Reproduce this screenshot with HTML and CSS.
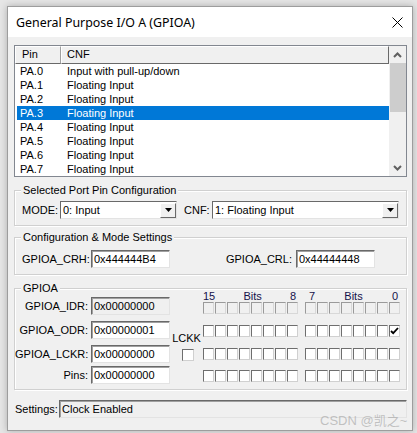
FILE: index.html
```html
<!DOCTYPE html>
<html>
<head>
<meta charset="utf-8">
<link rel="stylesheet" href="styles.css">
</head>
<body>
<div class="window">
  <div class="titlebar">
    <span class="title">General Purpose I/O A (GPIOA)</span>
    <svg class="close" width="11" height="11" viewBox="0 0 11 11"><path d="M0.5 0.5 L10.5 10.5 M10.5 0.5 L0.5 10.5" stroke="#000" stroke-width="1" fill="none"/></svg>
  </div>
  <div class="body">
    <div class="listview">
      <div class="lv-main">
        <div class="lv-header">
          <div class="hcell hpin">Pin</div>
          <div class="hcell hcnf">CNF</div>
        </div>
        <div class="lv-row"><span class="cpin">PA.0</span><span class="ccnf">Input with pull-up/down</span></div>
        <div class="lv-row"><span class="cpin">PA.1</span><span class="ccnf">Floating Input</span></div>
        <div class="lv-row"><span class="cpin">PA.2</span><span class="ccnf">Floating Input</span></div>
        <div class="lv-row sel"><span class="cpin">PA.3</span><span class="ccnf">Floating Input</span></div>
        <div class="lv-row"><span class="cpin">PA.4</span><span class="ccnf">Floating Input</span></div>
        <div class="lv-row"><span class="cpin">PA.5</span><span class="ccnf">Floating Input</span></div>
        <div class="lv-row"><span class="cpin">PA.6</span><span class="ccnf">Floating Input</span></div>
        <div class="lv-row"><span class="cpin">PA.7</span><span class="ccnf">Floating Input</span></div>
      </div>
      <div class="scrollbar">
        <div class="sb-btn"><svg width="9" height="6" viewBox="0 0 9 6"><path d="M1 5 L4.5 1.5 L8 5" stroke="#606060" stroke-width="2" fill="none"/></svg></div>
        <div class="sb-track"><div class="sb-thumb"></div></div>
        <div class="sb-btn"><svg width="9" height="6" viewBox="0 0 9 6"><path d="M1 1 L4.5 4.5 L8 1" stroke="#606060" stroke-width="2" fill="none"/></svg></div>
      </div>
    </div>

    <div class="group g1">
      <span class="gtitle">Selected Port Pin Configuration</span>
      <div class="g1-row">
        <span class="lbl-mode">MODE:</span>
        <div class="combo c-mode"><span class="ctext">0: Input</span><span class="cbtn"><svg width="7" height="4" viewBox="0 0 7 4"><path d="M0 0 H7 L3.5 4 Z" fill="#000"/></svg></span></div>
        <span class="lbl-cnf">CNF:</span>
        <div class="combo c-cnf"><span class="ctext">1: Floating Input</span><span class="cbtn"><svg width="7" height="4" viewBox="0 0 7 4"><path d="M0 0 H7 L3.5 4 Z" fill="#000"/></svg></span></div>
      </div>
    </div>

    <div class="group g2">
      <span class="gtitle">Configuration &amp; Mode Settings</span>
      <div class="g2-row">
        <span class="lbl-crh">GPIOA_CRH:</span>
        <div class="edit">0x444444B4</div>
        <span class="lbl-crl">GPIOA_CRL:</span>
        <div class="edit">0x44444448</div>
      </div>
    </div>

    <div class="group g3">
      <span class="gtitle">GPIOA</span>
      <div class="g3-content">
        <div class="regs">
          <div class="reg r1"><span class="rlbl">GPIOA_IDR:</span><div class="edit ro">0x00000000</div></div>
          <div class="reg r2"><span class="rlbl">GPIOA_ODR:</span><div class="edit">0x00000001</div></div>
          <div class="reg r3"><span class="rlbl">GPIOA_LCKR:</span><div class="edit">0x00000000</div></div>
          <div class="reg r4"><span class="rlbl">Pins:</span><div class="edit">0x00000000</div></div>
        </div>
        <div class="lckk">
          <span class="lckk-lbl">LCKK</span>
          <span class="cb"></span>
        </div>
        <div class="bits">
          <div class="bits-head">
            <div class="bh bh1"><span>15</span><span>Bits</span><span>8</span></div>
            <div class="bh bh2"><span>7</span><span>Bits</span><span>0</span></div>
          </div>
          <div class="brow b1" id="row-idr"></div>
          <div class="brow b2" id="row-odr"></div>
          <div class="brow b3" id="row-lckr"></div>
          <div class="brow b4" id="row-pins"></div>
        </div>
      </div>
    </div>

    <div class="settings">
      <span class="lbl-set">Settings:</span>
      <div class="edit ro set-box">Clock Enabled</div>
    </div>
  </div>
</div>
<div class="watermark">CSDN @凯之~</div>
<script>
(function(){
  var rows=[['row-idr',true,0],['row-odr',false,1],['row-lckr',false,0],['row-pins',false,0]];
  rows.forEach(function(r){
    var el=document.getElementById(r[0]);
    for(var g=0;g<2;g++){
      var grp=document.createElement('div');grp.className='bgroup';
      for(var i=0;i<8;i++){
        var c=document.createElement('span');
        c.className='cb'+(r[1]?' dis':'');
        var bit=15-(g*8+i);
        if(bit===0 && r[2]){
          c.className+=' on';
          c.innerHTML='<svg width="9" height="8" viewBox="0 0 9 8"><path d="M1 4 L3.2 6.2 L8 1" stroke="#000" stroke-width="1.8" fill="none"/></svg>';
        }
        grp.appendChild(c);
      }
      el.appendChild(grp);
    }
  });
})();
</script>
</body>
</html>
```

FILE: styles.css
```css
html, body { margin: 0; padding: 0; }
body {
  width: 417px;
  height: 433px;
  background: #e6e6e6;
  font-family: "Liberation Sans", Arial, sans-serif;
  font-size: 11px;
  color: #000;
  position: relative;
  overflow: hidden;
  padding-top: 6px;
  padding-left: 7px;
  box-sizing: border-box;
}
.window {
  width: 406px;
  height: 425px;
  box-sizing: border-box;
  border: 1px solid #9d9d9d;
  background: #f0f0f0;
  box-shadow: 0 0 7px rgba(0,0,0,0.25);
  display: flex;
  flex-direction: column;
}
.titlebar {
  height: 30px;
  flex: none;
  background: #fff;
  display: flex;
  align-items: center;
  padding: 0 9px 0 8px;
}
.title {
  font-family: "Noto Sans", "Open Sans", sans-serif;
  font-size: 12.4px;
  flex: 1;
  padding-top: 1px;
}
.close { display: block; margin-top: 1px; }

.body {
  padding: 8px 5px 0 6px;
  display: flex;
  flex-direction: column;
}

/* list view */
.listview {
  height: 132px;
  box-sizing: border-box;
  border: 1px solid #828790;
  background: #fff;
  display: flex;
}
.lv-main { flex: 1; }
.lv-header {
  height: 18px;
  display: flex;
  box-sizing: border-box;
}
.hcell {
  box-sizing: border-box;
  background: #f0f0f0;
  border-top: 1px solid #fff;
  border-left: 1px solid #fff;
  border-right: 1px solid #a0a0a0;
  border-bottom: 1px solid #696969;
  line-height: 15px;
}
.hpin { width: 46px; padding-left: 6px; }
.hcnf { flex: 1; padding-left: 5px; border-right-color: #696969; }
.lv-row {
  height: 14px;
  line-height: 14px;
  margin-left: 2px;
  display: flex;
}
.lv-row.sel { background: #0078d7; color: #fff; }
.cpin { width: 44px; padding-left: 3px; }
.ccnf { padding-left: 3px; }

.scrollbar {
  width: 17px;
  background: #f0f0f0;
  display: flex;
  flex-direction: column;
}
.sb-btn {
  height: 17px;
  display: flex;
  align-items: center;
  justify-content: center;
}
.sb-btn svg { display: block; }
.sb-track { flex: 1; }
.sb-thumb { height: 49px; margin: 0 0 0 1px; background: #cdcdcd; }

/* group boxes */
.group {
  position: relative;
  border: 1px solid #d0d0d0;
  box-shadow: inset 1px 1px 0 #fff, 1px 1px 0 #fff;
}
.gtitle {
  position: absolute;
  top: -7px;
  left: 6px;
  padding: 0 2px;
  line-height: 13px;
  background: #f0f0f0;
}
.g1 { margin-top: 13px; padding: 10px 0 6px 7px; }
.g1-row { display: flex; align-items: center; height: 18px; }
.lbl-mode { width: 38px; }
.lbl-cnf { width: 28px; margin-left: 7px; }
.combo {
  height: 18px;
  box-sizing: border-box;
  border: 1px solid;
  border-color: #696969 #e3e3e3 #e3e3e3 #696969;
  background: #fff;
  display: flex;
  align-items: center;
}
.c-mode { width: 117px; }
.c-cnf { width: 187px; }
.ctext { flex: 1; padding-left: 2px; }
.cbtn {
  width: 16px;
  height: 15px;
  box-sizing: border-box;
  margin-right: 0;
  background: #f0f0f0;
  border: 1px solid;
  border-color: #fff #696969 #696969 #fff;
  display: flex;
  align-items: center;
  justify-content: center;
}
.cbtn svg { display: block; }

.g2 { margin-top: 11px; padding: 12px 0 6px 7px; }
.g2-row { display: flex; align-items: center; height: 18px; }
.lbl-crh { width: 69px; }
.lbl-crl { width: 122px; text-align: right; padding-right: 4px; }
.edit {
  width: 79px;
  height: 18px;
  box-sizing: border-box;
  border: 1px solid;
  border-color: #696969 #e3e3e3 #e3e3e3 #696969;
  box-shadow: inset 1px 1px 0 #a0a0a0;
  background: #fff;
  padding-left: 2px;
  line-height: 16px;
}
.edit.ro { background: #f0f0f0; }

.g3 { margin-top: 13px; }
.g3-content { height: 100px; display: flex; }
.regs { width: 155px; padding-top: 8px; }
.reg { display: flex; align-items: center; height: 18px; }
.r2 { margin-top: 6px; }
.r3 { margin-top: 6px; }
.r4 { margin-top: 3px; }
.rlbl { width: 73px; text-align: right; padding-right: 3px; }
.lckk {
  width: 33px;
  display: flex;
  flex-direction: column;
  align-items: center;
  padding-top: 43px;
}
.lckk-lbl { line-height: 12px; }
.lckk .cb { margin-top: 5px; width: 12px; height: 12px; margin-left: 2px; }
.bits { width: 198px; padding-top: 1px; }
.bits-head { display: flex; height: 12px; line-height: 12px; color: #14104a; }
.bh { display: flex; justify-content: space-between; }
.bh1 { width: 96px; padding-right: 3px; box-sizing: border-box; }
.bh2 { width: 96px; margin-left: 6px; padding: 0 3px 0 4px; box-sizing: border-box; }
.brow { display: flex; height: 12px; }
.b1 { margin-top: 0; }
.b2 { margin-top: 11px; }
.b3 { margin-top: 11px; }
.b4 { margin-top: 10px; }
.bgroup { display: flex; gap: 1px; }
.bgroup + .bgroup { margin-left: 7px; }
.cb {
  display: flex;
  align-items: center;
  justify-content: center;
  width: 11px;
  height: 12px;
  box-sizing: border-box;
  border: 1px solid;
  border-color: #6e6e6e #d0d0d0 #d0d0d0 #6e6e6e;
  background: #fff;
}
.cb.dis { background: #f0f0f0; border-color: #9a9a9a #d8d8d8 #d8d8d8 #9a9a9a; }
.cb svg { display: block; }

.settings {
  margin-top: 10px;
  display: flex;
  align-items: center;
}
.lbl-set { width: 44px; padding-left: 1px; }
.set-box { width: 348px; }

.watermark {
  position: absolute;
  left: 320px;
  top: 410px;
  font-family: "Liberation Sans", "Noto Sans CJK SC", sans-serif;
  font-size: 13px;
  color: rgba(160,160,160,0.6);
  white-space: nowrap;
}
```
